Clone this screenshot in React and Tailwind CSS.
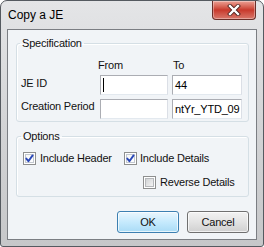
import React from "react";

function CheckBox({ checked }) {
  return (
    <svg width="13" height="13" viewBox="0 0 13 13" className="shrink-0">
      <defs>
        <linearGradient id={checked ? "cbg1" : "cbg0"} x1="0" y1="0" x2="1" y2="1">
          <stop offset="0" stopColor={checked ? "#f4f6f8" : "#cfd1d3"} />
          <stop offset="1" stopColor={checked ? "#ffffff" : "#f6f6f6"} />
        </linearGradient>
      </defs>
      <rect x="0.5" y="0.5" width="12" height="12" fill="#ffffff" stroke="#8e8f8f" />
      <rect x="2.5" y="2.5" width="8" height="8" fill={`url(#${checked ? "cbg1" : "cbg0"})`} stroke={checked ? "#c3c8d0" : "#b5b7ba"} />
      {checked && (
        <path d="M3.3 6.6 L5.4 9.2 L9.6 3.4" fill="none" stroke="#2a48b8" strokeWidth="1.9" strokeLinecap="round" strokeLinejoin="round" />
      )}
    </svg>
  );
}

function Input({ children, cursor }) {
  return (
    <div className="h-[20px] bg-white border border-[#abadb3] border-r-[#dbdfe6] border-b-[#e3e9ef] flex items-center pl-[2px] overflow-hidden whitespace-nowrap text-[11px] text-black">
      {cursor && <span className="block w-[1px] h-[14px] bg-black" />}
      {children}
    </div>
  );
}

export default function App() {
  return (
    <div
      className="w-[264px] h-[247px] bg-white text-[11px] text-[#111] tracking-[-0.2px]"
      style={{ fontFamily: "'Liberation Sans', Arial, sans-serif" }}
    >
      <div className="w-[264px] h-[247px] rounded-t-[7px] rounded-b-[3px] border border-[#555a60] bg-gradient-to-b from-[#e4e5e7] via-[#d3d4d6] to-[#c6c7c9] flex flex-col">
        {/* title bar */}
        <div className="h-[28px] flex items-start justify-between">
          <div className="pl-[7px] pt-[7px] text-[12px] leading-[15px] text-black tracking-normal">Copy a JE</div>
          <div className="mr-[7px] w-[44px] h-[19px] rounded-b-[4px] border border-t-0 border-[#6b2f29] bg-gradient-to-b from-[#eba095] via-[#c8382b] to-[#d8766a] flex items-center justify-center shadow-[inset_0_0_0_1px_rgba(255,255,255,0.35)]">
            <svg width="14" height="12" viewBox="0 0 14 12">
              <path d="M3 2 L11 10 M11 2 L3 10" stroke="#4a1f1b" strokeWidth="4" strokeLinecap="square" />
              <path d="M3 2 L11 10 M11 2 L3 10" stroke="#ffffff" strokeWidth="2.4" strokeLinecap="square" />
            </svg>
          </div>
        </div>

        {/* client area */}
        <div className="mx-[6px] mb-[6px] flex-1 border border-[#7b7e83] bg-[#f1f4f7] flex flex-col">
          {/* Specification */}
          <fieldset className="mt-[7px] ml-[8px] mr-[7px] border border-[#d5dfe5] rounded-[3px] px-0 pt-[9px] pb-[2px] shadow-[inset_1px_1px_0_#ffffff]">
            <legend className="ml-[3px] px-[2px] leading-[13px]">Specification</legend>
            <div className="grid grid-cols-[75px_68px_70px] gap-x-[4px] ml-[4px]">
              <div className="h-[13px] leading-[13px]" />
              <div className="h-[13px] leading-[13px] -ml-[2px]">From</div>
              <div className="h-[13px] leading-[13px] ml-[1px]">To</div>

              <div className="mt-[3px] pt-[2px] leading-[13px]">JE ID</div>
              <div className="mt-[3px]"><Input cursor /></div>
              <div className="mt-[3px]"><Input>44</Input></div>

              <div className="mt-[4px] pt-[1px] leading-[13px] whitespace-nowrap">Creation Period</div>
              <div className="mt-[4px]"><Input /></div>
              <div className="mt-[4px]"><Input>ntYr_YTD_09</Input></div>
            </div>
          </fieldset>

          {/* Options */}
          <fieldset className="mt-[8px] ml-[8px] mr-[7px] border border-[#d5dfe5] rounded-[3px] px-0 pt-[9px] pb-[7px] shadow-[inset_1px_1px_0_#ffffff]">
            <legend className="ml-[4px] px-[2px] leading-[13px]">Options</legend>
            <div className="flex items-center ml-[6px] h-[13px]">
              <div className="w-[101px] flex items-center">
                <CheckBox checked />
                <span className="ml-[4px] leading-[13px] whitespace-nowrap">Include Header</span>
              </div>
              <div className="flex items-center">
                <CheckBox checked />
                <span className="ml-[3px] leading-[13px] whitespace-nowrap">Include Details</span>
              </div>
            </div>
            <div className="flex items-center ml-[126px] mt-[11px] h-[13px]">
              <CheckBox />
              <span className="ml-[4px] leading-[13px] whitespace-nowrap">Reverse Details</span>
            </div>
          </fieldset>

          {/* Buttons */}
          <div className="mt-[14px] mr-[7px] flex justify-end gap-[8px]">
            <button className="w-[62px] h-[22px] rounded-[3px] border border-[#3c7fb1] bg-gradient-to-b from-[#eaf6fd] via-[#c6eafd] to-[#a9dbf6] shadow-[inset_0_0_0_1px_rgba(255,255,255,0.7)] text-[11px] leading-[13px] flex items-center justify-center">
              OK
            </button>
            <button className="w-[62px] h-[22px] rounded-[3px] border border-[#707070] bg-gradient-to-b from-[#f2f2f2] via-[#e3e3e3] to-[#d0d0d0] shadow-[inset_0_0_0_1px_rgba(255,255,255,0.7)] text-[11px] leading-[13px] flex items-center justify-center">
              Cancel
            </button>
          </div>
        </div>
      </div>
    </div>
  );
}
